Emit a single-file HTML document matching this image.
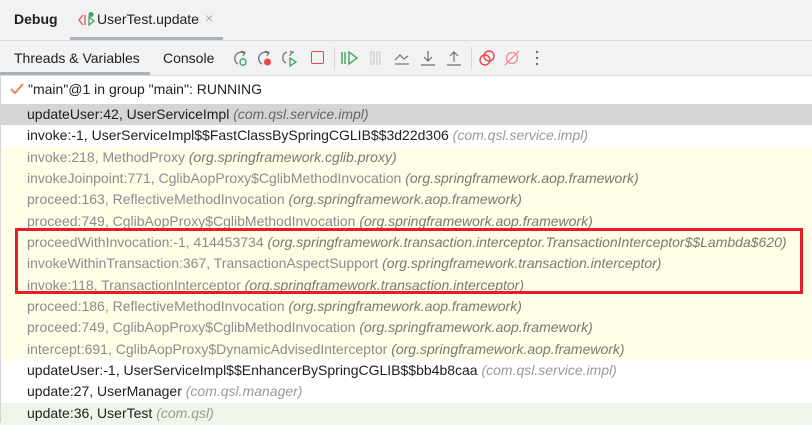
<!DOCTYPE html>
<html><head><meta charset="utf-8">
<style>
*{margin:0;padding:0;box-sizing:border-box}
body{width:812px;height:423px;overflow:hidden;background:#fff;font-family:"Liberation Sans",sans-serif;font-size:14px;color:#1e1e1e;position:relative}
.abs{position:absolute}
.hdr{left:0;top:0;width:812px;height:75px;background:#f2f2f2}
.row{position:absolute;left:1px;width:811px;height:22px;line-height:20px;padding-left:26px;white-space:nowrap;overflow:hidden}
.y{background:#fdfde8;color:#8c8c8c}
.y i{color:#7a7a6a}
.w i{color:#999}
.g i{color:#666}
i{font-style:italic}
svg{position:absolute}
</style></head><body>
<div class="abs hdr"></div>
<div class="abs" style="left:14px;top:11px;font-weight:bold;font-size:14px">Debug</div>
<svg style="left:77px;top:11px" width="22" height="18" viewBox="0 0 22 18"><path d="M6 4 L2 9 L6 14" fill="none" stroke="#e05555" stroke-width="1.3"/><path d="M8 4 V14" stroke="#e05555" stroke-width="1.3"/><path d="M12 6 L17 10 L12 14 Z" fill="none" stroke="#3fa35a" stroke-width="1.3"/><circle cx="14" cy="3.5" r="2.5" fill="#3fa35a"/></svg>
<div class="abs" style="left:97px;top:11px">UserTest.update</div>
<div class="abs" style="left:205px;top:10px;color:#aaa;font-size:14px">×</div>
<div class="abs" style="left:70px;top:37px;width:153px;height:3px;background:#aab0bc;border-radius:1px"></div>
<div class="abs" style="left:0;top:40px;width:812px;height:1px;background:#dcdcdc"></div>
<div class="abs" style="left:14px;top:50px">Threads &amp; Variables</div>
<div class="abs" style="left:163px;top:50px">Console</div>
<div class="abs" style="left:0;top:72px;width:150px;height:3px;background:#aab0bc"></div>
<div class="abs" style="left:0;top:75px;width:812px;height:1px;background:#dcdcdc"></div>
<!-- icons -->
<svg style="left:230px;top:48px" width="20" height="20" viewBox="0 0 20 20"><path d="M14 5 A6 6 0 1 0 8 16" fill="none" stroke="#6c707e" stroke-width="1.3"/><path d="M11 3 L15 4.5 L13 8" fill="none" stroke="#6c707e" stroke-width="1.2"/><ellipse cx="13" cy="14" rx="3" ry="3.2" fill="none" stroke="#3fa35a" stroke-width="1.3"/></svg>
<svg style="left:254px;top:48px" width="20" height="20" viewBox="0 0 20 20"><path d="M14 5 A6 6 0 1 0 8 16" fill="none" stroke="#6c707e" stroke-width="1.3"/><path d="M11 3 L15 4.5 L13 8" fill="none" stroke="#6c707e" stroke-width="1.2"/><circle cx="13.5" cy="14" r="3.5" fill="#e5474b"/></svg>
<svg style="left:280px;top:48px" width="20" height="20" viewBox="0 0 20 20"><path d="M7 4 A6 6 0 0 0 6 15" fill="none" stroke="#6c707e" stroke-width="1.3"/><path d="M10 3 L13 5 M10 8 A4 4 0 0 1 14 4" fill="none" stroke="#6c707e" stroke-width="1.2"/><path d="M10 10 L16 14 L10 18 Z" fill="none" stroke="#3fa35a" stroke-width="1.3"/></svg>
<div class="abs" style="left:311px;top:51px;width:13px;height:13px;border:1.4px solid #e5474b;border-radius:2px"></div>
<div class="abs" style="left:334px;top:47px;width:1px;height:22px;background:#d5d5d5"></div>
<svg style="left:340px;top:49px" width="20" height="18" viewBox="0 0 20 18"><path d="M2 3 V15 M5 3 V15" stroke="#3fa35a" stroke-width="1.4"/><path d="M9 3 L17 9 L9 15 Z" fill="none" stroke="#3fa35a" stroke-width="1.4"/></svg>
<svg style="left:369px;top:49px" width="14" height="18" viewBox="0 0 14 18"><rect x="2" y="3" width="3" height="12" fill="none" stroke="#c4c6cc"/><rect x="8" y="3" width="3" height="12" fill="none" stroke="#c4c6cc"/></svg>
<svg style="left:393px;top:49px" width="18" height="18" viewBox="0 0 18 18"><path d="M2 11 L7 6 L11 10 L15 7" fill="none" stroke="#6c707e" stroke-width="1.2"/><path d="M2 15 H16" stroke="#6c707e" stroke-width="1.2"/></svg>
<svg style="left:419px;top:48px" width="18" height="20" viewBox="0 0 18 20"><path d="M9 3 V13 M5 9 L9 13 L13 9 M2 17 H16" fill="none" stroke="#6c707e" stroke-width="1.2"/></svg>
<svg style="left:445px;top:48px" width="18" height="20" viewBox="0 0 18 20"><path d="M9 14 V4 M5 8 L9 4 L13 8 M2 17 H16" fill="none" stroke="#6c707e" stroke-width="1.2"/></svg>
<div class="abs" style="left:471px;top:47px;width:1px;height:22px;background:#d5d5d5"></div>
<svg style="left:477px;top:48px" width="20" height="20" viewBox="0 0 20 20"><circle cx="8" cy="12" r="5" fill="none" stroke="#e5474b" stroke-width="1.4"/><circle cx="12" cy="8" r="5" fill="none" stroke="#e5474b" stroke-width="1.4"/></svg>
<svg style="left:502px;top:48px" width="20" height="20" viewBox="0 0 20 20"><circle cx="10" cy="10" r="5.5" fill="none" stroke="#ef8c8e" stroke-width="1.3"/><path d="M3 17 L17 3" stroke="#ef8c8e" stroke-width="1.3"/></svg>
<svg style="left:532px;top:48px" width="10" height="20" viewBox="0 0 10 20"><circle cx="5" cy="4" r="1.2" fill="#6c707e"/><circle cx="5" cy="10" r="1.2" fill="#6c707e"/><circle cx="5" cy="16" r="1.2" fill="#6c707e"/></svg>
<!-- thread line -->
<svg style="left:10px;top:83px" width="14" height="12" viewBox="0 0 14 12"><path d="M1 6 L5 10 L13 1" fill="none" stroke="#e8884a" stroke-width="2"/></svg>
<div class="abs" style="left:28px;top:81px">"main"@1 in group "main": RUNNING</div>
<div class="abs" style="left:0;top:76px;width:1px;height:347px;background:#d5d5d5"></div>
<div class="row g" style="top:104px;background:#d5d5d5">updateUser:42, UserServiceImpl <i>(com.qsl.service.impl)</i></div>
<div class="row w" style="top:125.3px;background:#fff">invoke:-1, UserServiceImpl$$FastClassBySpringCGLIB$$3d22d306 <i>(com.qsl.service.impl)</i></div>
<div class="row y" style="top:146.7px">invoke:218, MethodProxy <i>(org.springframework.cglib.proxy)</i></div>
<div class="row y" style="top:168px">invokeJoinpoint:771, CglibAopProxy$CglibMethodInvocation <i>(org.springframework.aop.framework)</i></div>
<div class="row y" style="top:189.3px">proceed:163, ReflectiveMethodInvocation <i>(org.springframework.aop.framework)</i></div>
<div class="row y" style="top:210.7px">proceed:749, CglibAopProxy$CglibMethodInvocation <i>(org.springframework.aop.framework)</i></div>
<div class="row y" style="top:232px">proceedWithInvocation:-1, 414453734 <i>(org.springframework.transaction.interceptor.TransactionInterceptor$$Lambda$620)</i></div>
<div class="row y" style="top:253.3px">invokeWithinTransaction:367, TransactionAspectSupport <i>(org.springframework.transaction.interceptor)</i></div>
<div class="row y" style="top:274.7px">invoke:118, TransactionInterceptor <i>(org.springframework.transaction.interceptor)</i></div>
<div class="row y" style="top:296px">proceed:186, ReflectiveMethodInvocation <i>(org.springframework.aop.framework)</i></div>
<div class="row y" style="top:317.3px">proceed:749, CglibAopProxy$CglibMethodInvocation <i>(org.springframework.aop.framework)</i></div>
<div class="row y" style="top:338.7px">intercept:691, CglibAopProxy$DynamicAdvisedInterceptor <i>(org.springframework.aop.framework)</i></div>
<div class="row w" style="top:360px;background:#fff">updateUser:-1, UserServiceImpl$$EnhancerBySpringCGLIB$$bb4b8caa <i>(com.qsl.service.impl)</i></div>
<div class="row w" style="top:381.3px;background:#fff">update:27, UserManager <i>(com.qsl.manager)</i></div>
<div class="row w" style="top:402.7px;background:#eef6e9">update:36, UserTest <i>(com.qsl)</i></div>
<div class="abs" style="left:15px;top:228px;width:788px;height:66px;border:3px solid #e41e26"></div>
</body></html>
